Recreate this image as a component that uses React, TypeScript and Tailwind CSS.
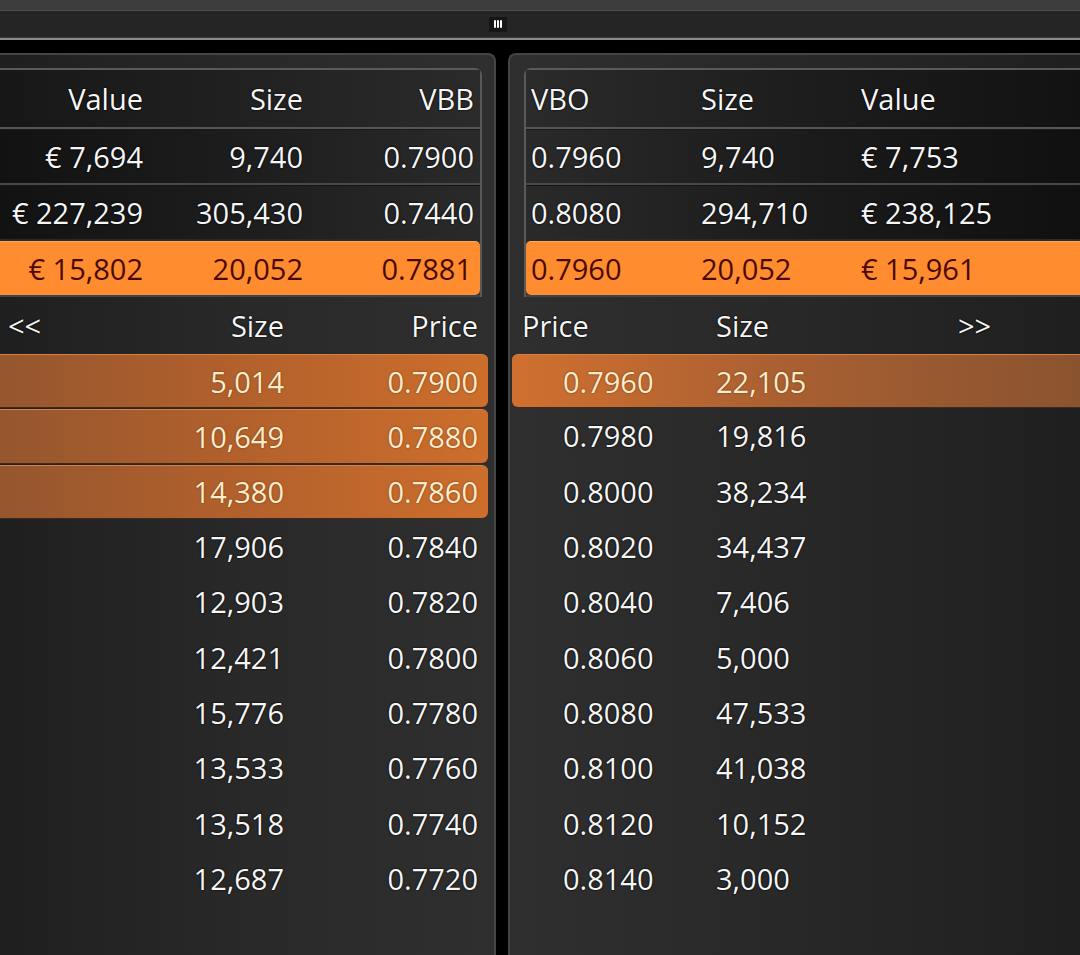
import React from "react";

const leftTop = [
  { v: "€ 7,694", s: "9,740", p: "0.7900" },
  { v: "€ 227,239", s: "305,430", p: "0.7440" },
];
const rightTop = [
  { p: "0.7960", s: "9,740", v: "€ 7,753" },
  { p: "0.8080", s: "294,710", v: "€ 238,125" },
];
const bids = [
  ["5,014", "0.7900", true],
  ["10,649", "0.7880", true],
  ["14,380", "0.7860", true],
  ["17,906", "0.7840", false],
  ["12,903", "0.7820", false],
  ["12,421", "0.7800", false],
  ["15,776", "0.7780", false],
  ["13,533", "0.7760", false],
  ["13,518", "0.7740", false],
  ["12,687", "0.7720", false],
] as const;
const asks = [
  ["0.7960", "22,105", true],
  ["0.7980", "19,816", false],
  ["0.8000", "38,234", false],
  ["0.8020", "34,437", false],
  ["0.8040", "7,406", false],
  ["0.8060", "5,000", false],
  ["0.8080", "47,533", false],
  ["0.8100", "41,038", false],
  ["0.8120", "10,152", false],
  ["0.8140", "3,000", false],
] as const;

const W = "text-[#f6f6f6] [text-shadow:0_0_2px_#000,0_0_1px_#000]";
const CREAM = "text-[#ffeccb] [text-shadow:0_0_2px_#6a3410]";
const DARK = "text-[#4a0a02]";

export default function App() {
  return (
    <div
      className="w-[1080px] h-[955px] overflow-hidden bg-black flex flex-col text-[29px] leading-none"
      style={{ fontFamily: '"Open Sans", "Noto Sans", sans-serif' }}
    >
      {/* top strip */}
      <div className="h-[11px] bg-[#3c3c3c] border-b border-[#4e4e4e]" />
      <div className="h-[26px] bg-[#252525] flex items-center pl-[489px]">
        <div className="w-[18px] h-[15px] bg-[#161616] flex items-center justify-center gap-[1px]">
          <span className="w-[2px] h-[8px] rounded-full bg-white" />
          <span className="w-[2px] h-[8px] rounded-full bg-white" />
          <span className="w-[2px] h-[8px] rounded-full bg-white" />
        </div>
      </div>
      <div className="h-[1px] bg-[#3a3a3a]" />
      <div className="h-[2px] bg-[#8a8a8a]" />
      <div className="h-[13px] bg-black" />

      <div className="flex flex-1 min-h-0">
        {/* LEFT PANEL */}
        <div className="w-[496px] shrink-0 rounded-tr-[8px] border-t-2 border-r-2 border-[#454545] bg-gradient-to-r from-[#1f1f1f] via-[#292929] to-[#2f2f2f] pt-[13px] flex flex-col">
          {/* top table */}
          <div className="w-[482px] rounded-tr-[7px] border-t-2 border-r-2 border-[#5a5a5a] flex flex-col">
            <div className={`h-[57px] flex items-center bg-gradient-to-r from-[#171717] to-[#2b2b2b] ${W}`}>
              <div className="w-[150px] text-right pr-[7px]">Value</div>
              <div className="w-[160px] text-right pr-[7px]">Size</div>
              <div className="flex-1 text-right pr-[6px]">VBB</div>
            </div>
            <div className="h-[3px] bg-[#555] border-b border-[#1a1a1a]" />
            {leftTop.map((r, i) => (
              <React.Fragment key={i}>
                <div className={`h-[53px] flex items-center bg-gradient-to-r from-[#121212] via-[#1d1d1d] to-[#2a2a2a] ${W}`}>
                  <div className="w-[150px] text-right pr-[7px]">{r.v}</div>
                  <div className="w-[160px] text-right pr-[7px]">{r.s}</div>
                  <div className="flex-1 text-right pr-[6px]">{r.p}</div>
                </div>
                <div className={i === 0 ? "h-[3px] bg-[#484848] border-b border-[#151515]" : "h-[2px] bg-[#2a2a2a]"} />
              </React.Fragment>
            ))}
            <div className={`h-[54px] flex items-center rounded-r-[5px] bg-[#ff8c2f] border-t border-[#ffa55a] ${DARK}`}>
              <div className="w-[150px] text-right pr-[7px]">€ 15,802</div>
              <div className="w-[160px] text-right pr-[7px]">20,052</div>
              <div className="flex-1 text-right pr-[8px]">0.7881</div>
            </div>
            <div className="h-[2px] bg-[#3b4652]" />
          </div>
          {/* ladder header */}
          <div className={`h-[56px] flex items-center w-[488px] ${W}`}>
            <div className="w-[150px] pl-[8px]">&lt;&lt;</div>
            <div className="w-[134px] text-right">Size</div>
            <div className="flex-1 text-right pr-[10px]">Price</div>
          </div>
          {bids.map(([s, p, hl], i) => (
            <div key={i} className="h-[55.33px] w-[488px] py-[1px]">
              <div
                className={`h-full flex items-center rounded-r-[6px] ${
                  hl
                    ? `bg-gradient-to-r from-[#96562e] via-[#b3612c] to-[#cd6e2c] border-t border-[#d9813f] shadow-[0_1px_0_#3a2a20] ${CREAM}`
                    : W
                }`}
              >
                <div className="w-[284px] text-right">{s}</div>
                <div className="flex-1 text-right pr-[10px]">{p}</div>
              </div>
            </div>
          ))}
        </div>

        {/* divider */}
        <div className="w-[12px] shrink-0 bg-black" />

        {/* RIGHT PANEL */}
        <div className="flex-1 rounded-tl-[8px] border-t-2 border-l-2 border-[#454545] bg-gradient-to-r from-[#2f2f2f] via-[#282828] to-[#1f1f1f] pt-[13px] flex flex-col">
          <div className="ml-[14px] rounded-tl-[7px] border-t-2 border-l-2 border-[#5a5a5a] flex flex-col">
            <div className={`h-[57px] flex items-center bg-gradient-to-r from-[#2b2b2b] via-[#1d1d1d] to-[#121212] ${W}`}>
              <div className="w-[170px] pl-[5px]">VBO</div>
              <div className="w-[160px] pl-[5px]">Size</div>
              <div className="flex-1 pl-[5px]">Value</div>
            </div>
            <div className="h-[3px] bg-[#555] border-b border-[#1a1a1a]" />
            {rightTop.map((r, i) => (
              <React.Fragment key={i}>
                <div className={`h-[53px] flex items-center bg-gradient-to-r from-[#2a2a2a] via-[#1b1b1b] to-[#101010] ${W}`}>
                  <div className="w-[170px] pl-[5px]">{r.p}</div>
                  <div className="w-[160px] pl-[5px]">{r.s}</div>
                  <div className="flex-1 pl-[5px]">{r.v}</div>
                </div>
                <div className={i === 0 ? "h-[3px] bg-[#484848] border-b border-[#151515]" : "h-[2px] bg-[#2a2a2a]"} />
              </React.Fragment>
            ))}
            <div className={`h-[54px] flex items-center rounded-l-[5px] bg-[#ff8c2f] border-t border-[#ffa55a] ${DARK}`}>
              <div className="w-[170px] pl-[5px]">0.7960</div>
              <div className="w-[160px] pl-[5px]">20,052</div>
              <div className="flex-1 pl-[5px]">€ 15,961</div>
            </div>
            <div className="h-[2px] bg-[#3b4652]" />
          </div>
          <div className={`h-[56px] flex items-center ${W}`}>
            <div className="w-[206px] pl-[12px]">Price</div>
            <div className="w-[242px]">Size</div>
            <div className="flex-1">&gt;&gt;</div>
          </div>
          {asks.map(([p, s, hl], i) => (
            <div key={i} className="h-[55.33px] pl-[2px] py-[1px]">
              <div
                className={`h-full flex items-center rounded-l-[6px] ${
                  hl
                    ? `bg-gradient-to-r from-[#d0702f] via-[#a85f32] to-[#8a532f] border-t border-[#d9813f] shadow-[0_1px_0_#3a2a20] ${CREAM}`
                    : W
                }`}
              >
                <div className="w-[204px] pl-[51px]">{p}</div>
                <div className="flex-1">{s}</div>
              </div>
            </div>
          ))}
        </div>
      </div>
    </div>
  );
}
